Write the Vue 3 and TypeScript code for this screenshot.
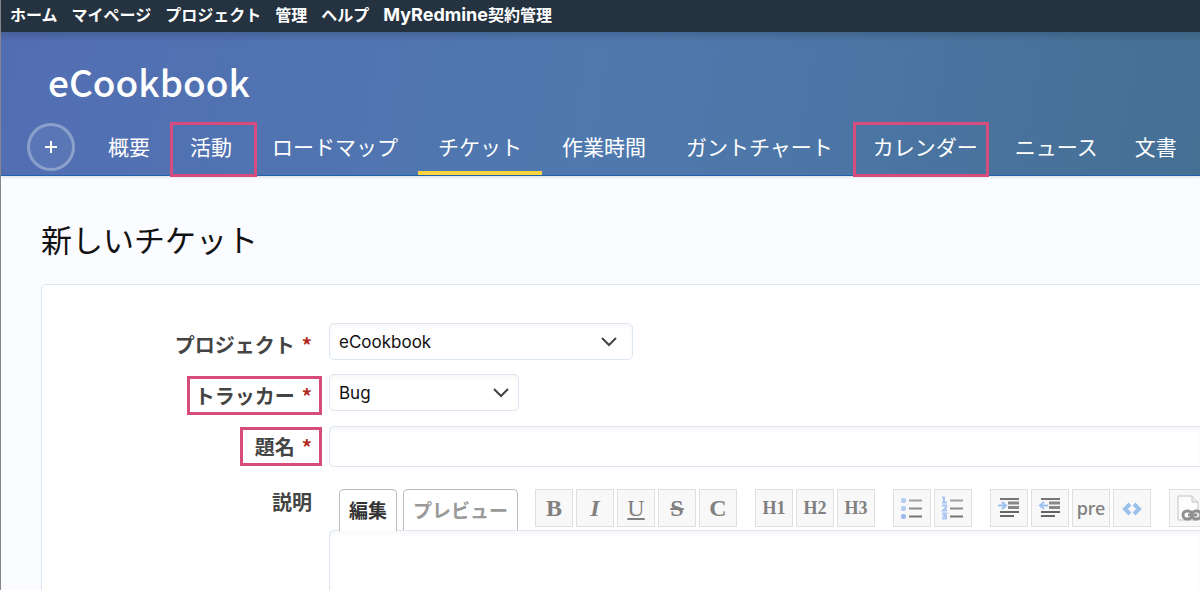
<script setup lang="ts">
import { ref } from 'vue'

interface NavItem {
  label: string
  active?: boolean
  marked?: boolean
  compact?: boolean
}

interface TopLink {
  latin?: string
  label: string
}

interface ToolButton {
  name: string
  kind: 'text' | 'icon'
  text?: string
}

const topLinks: TopLink[] = [
  { label: 'ホーム' },
  { label: 'マイページ' },
  { label: 'プロジェクト' },
  { label: '管理' },
  { label: 'ヘルプ' },
  { latin: 'MyRedmine', label: '契約管理' },
]

const navItems: NavItem[] = [
  { label: '概要' },
  { label: '活動', marked: true },
  { label: 'ロードマップ' },
  { label: 'チケット', active: true },
  { label: '作業時間' },
  { label: 'ガントチャート' },
  { label: 'カレンダー', marked: true, compact: true },
  { label: 'ニュース', compact: true },
  { label: '文書' },
]

const toolGroups: ToolButton[][] = [
  [
    { name: 'bold', kind: 'text', text: 'B' },
    { name: 'italic', kind: 'text', text: 'I' },
    { name: 'underline', kind: 'text', text: 'U' },
    { name: 'strike', kind: 'text', text: 'S' },
    { name: 'code', kind: 'text', text: 'C' },
  ],
  [
    { name: 'heading', kind: 'text', text: 'H1' },
    { name: 'heading', kind: 'text', text: 'H2' },
    { name: 'heading', kind: 'text', text: 'H3' },
  ],
  [
    { name: 'bullets', kind: 'icon' },
    { name: 'numbers', kind: 'icon' },
  ],
  [
    { name: 'indent', kind: 'icon' },
    { name: 'outdent', kind: 'icon' },
    { name: 'pre', kind: 'text', text: 'pre' },
    { name: 'snippet', kind: 'icon' },
  ],
  [{ name: 'link', kind: 'icon' }],
]

const project = ref('eCookbook')
const tracker = ref('Bug')
const subject = ref('')
const description = ref('')
</script>

<template>
  <div class="page">
    <nav class="top-menu">
      <a v-for="link in topLinks" :key="link.label" href="#"><span v-if="link.latin" class="latin">{{ link.latin }}</span>{{ link.label }}</a>
    </nav>

    <header class="header">
      <h1>eCookbook</h1>
      <nav class="main-menu">
        <button class="add" type="button" aria-label="+">
          <svg width="14" height="14" viewBox="0 0 14 14"><path d="M7 1v12M1 7h12" stroke="#fff" stroke-width="2" fill="none" /></svg>
        </button>
        <a
          v-for="item in navItems"
          :key="item.label"
          href="#"
          :class="{ active: item.active, marked: item.marked, compact: item.compact }"
        >{{ item.label }}</a>
      </nav>
    </header>

    <main class="content">
      <h2>新しいチケット</h2>
      <form class="card" @submit.prevent>
        <div class="row">
          <label for="project">プロジェクト<span class="req">*</span></label>
          <div class="select project">
            <select id="project" v-model="project"><option>eCookbook</option></select>
            <svg width="18" height="12" viewBox="0 0 18 12"><path d="M2 2l7 7 7-7" /></svg>
          </div>
        </div>
        <div class="row">
          <label for="tracker"><span class="mark">トラッカー<span class="req">*</span></span></label>
          <div class="select tracker">
            <select id="tracker" v-model="tracker"><option>Bug</option></select>
            <svg width="18" height="12" viewBox="0 0 18 12"><path d="M2 2l7 7 7-7" /></svg>
          </div>
        </div>
        <div class="row subject">
          <label for="subject"><span class="mark">題名<span class="req">*</span></span></label>
          <input id="subject" v-model="subject" type="text">
        </div>
        <div class="row description">
          <label for="description">説明</label>
          <div class="editor">
            <div class="bar">
              <button type="button" class="tab current">編集</button>
              <button type="button" class="tab">プレビュー</button>
              <div class="tools">
                <div v-for="(group, g) in toolGroups" :key="g" class="group">
                  <button v-for="(tool, t) in group" :key="t" type="button" class="tool" :class="tool.name" :aria-label="tool.text ?? tool.name">
                    <span v-if="tool.kind === 'text'">{{ tool.text }}</span>
                    <svg v-else-if="tool.name === 'bullets'" width="24" height="24" viewBox="0 0 24 24">
                      <g fill="#b4cdf3"><rect x="1" y="2" width="5" height="5" rx="2" /><rect x="1" y="10" width="5" height="5" rx="2" /><rect x="1" y="18" width="5" height="5" rx="2" fill="#9dbaf0" /></g>
                      <g stroke-width="2"><path d="M9 4.5h13" stroke="#a0a0a0" /><path d="M9 12.500h13" stroke="#8c8c8c" /><path d="M9 20.5h13" stroke="#747474" /></g>
                    </svg>
                    <svg v-else-if="tool.name === 'numbers'" width="24" height="24" viewBox="0 0 24 24">
                      <g stroke="#a9c6f3" stroke-width="2" fill="none"><path d="M1 1.500h2v5M1 6.500h5" /><path d="M1 9.500h4v2l-3 3h4" /><path d="M1 17.500h4l-2 2.500h2v2.500H1" /></g>
                      <g stroke-width="2"><path d="M9 4.5h13" stroke="#a0a0a0" /><path d="M9 12.500h13" stroke="#8c8c8c" /><path d="M9 20.5h13" stroke="#747474" /></g>
                    </svg>
                    <svg v-else-if="tool.name === 'indent' || tool.name === 'outdent'" width="24" height="24" viewBox="0 0 24 24">
                      <path d="M3 3h19" stroke="#777" stroke-width="2" />
                      <path d="M11 7h11M11 11.500h11" stroke="#888" stroke-width="3" />
                      <path d="M3 16h19" stroke="#666" stroke-width="2" /><path d="M3 20h14" stroke="#666" stroke-width="2" />
                      <path v-if="tool.name === 'indent'" d="M1 9.500h7M5 6l4 3.500L5 13" stroke="#9cc1f0" stroke-width="2" fill="none" />
                      <path v-else d="M10 9.500H3M6 6L2 9.500 6 13" stroke="#9cc1f0" stroke-width="2" fill="none" />
                    </svg>
                    <svg v-else-if="tool.name === 'snippet'" width="24" height="24" viewBox="0 0 24 24">
                      <path d="M10 8l-5 5 5 5M14 8l5 5-5 5" stroke="#9bc0ea" stroke-width="4" fill="none" />
                    </svg>
                    <svg v-else width="28" height="28" viewBox="0 0 28 28">
                      <path d="M4 2h14l6 6v18H4z" fill="#fdfdfd" stroke="#c4c4c4" /><path d="M18 2v6h6" fill="#eee" stroke="#c4c4c4" />
                      <g fill="none" stroke="#909090" stroke-width="3"><rect x="9" y="17" width="9" height="8" rx="4" /><rect x="18" y="17" width="9" height="8" rx="4" /><path d="M14 21h9" /></g>
                    </svg>
                  </button>
                </div>
              </div>
            </div>
            <textarea id="description" v-model="description"></textarea>
          </div>
        </div>
      </form>
    </main>
  </div>
</template>

<style>
body {
  margin: 0;
}
</style>

<style scoped>
* {
  box-sizing: border-box;
}

.page {
  display: flex;
  flex-direction: column;
  height: 100vh;
  overflow: hidden;
  border-left: 1px solid #85878b;
  background: #fafcff;
  color: #111;
  font-family: "Noto Sans CJK JP", sans-serif;
}

a {
  color: #fff;
  text-decoration: none;
  white-space: nowrap;
}

button {
  font-family: inherit;
}

.top-menu {
  display: flex;
  flex: none;
  gap: 14px;
  height: 32px;
  padding: 0 9px;
  background: #25323f;
  font-size: 16px;
  font-weight: 700;
  line-height: 28px;
}

.latin {
  font-family: Inter, sans-serif;
  font-size: 18px;
}

.header {
  flex: none;
  padding: 26px 0 0 26px;
  border-bottom: 1px solid #1f62ad;
  background: linear-gradient(#0002, #0000 10px), linear-gradient(100deg, #526eb3, #4f79ae 52%, #456f93);
  box-shadow: 0 1px 3px #0002;
}

h1 {
  margin: 0 0 0 21px;
  color: #fff;
  font-size: 37px;
  font-weight: 500;
  line-height: 46px;
}

.main-menu {
  display: flex;
  height: 71px;
  padding-top: 17px;
}

.add {
  display: grid;
  flex: none;
  place-items: center;
  width: 48px;
  height: 48px;
  margin: 2px 13px 0 0;
  padding: 0;
  border: 3px solid #ffffff4d;
  border-radius: 50%;
  background: #ffffff0d;
}

.main-menu a {
  position: relative;
  flex: none;
  padding: 0 20px;
  font-size: 21px;
  line-height: 50px;
}

.main-menu a.active {
  border-bottom: 4px solid #fcd43d;
}

.main-menu a.compact {
  padding-right: 17px;
}

.main-menu a.marked::after {
  content: "";
  position: absolute;
  inset: 1px -5px -2px 0;
  border: 3px solid #d64c7c;
}

.main-menu a.compact::after {
  right: 6px;
}

.content {
  display: flex;
  flex: 1;
  flex-direction: column;
  min-height: 0;
  padding: 40px 0 0 40px;
}

h2 {
  margin: 0 0 22px;
  font-size: 31px;
  font-weight: 400;
  line-height: 46px;
}

.card {
  display: flex;
  flex: 1;
  flex-direction: column;
  gap: 14px;
  padding: 38px 0 0 25px;
  border: solid #dce6f0;
  border-width: 1px 0 0 1px;
  border-radius: 5px 0 0 0;
  background: #fff;
}

.row {
  display: flex;
  gap: 17px;
}

.row label {
  flex: none;
  width: 245px;
  padding-top: 7px;
  color: #444;
  font-size: 20px;
  font-weight: 700;
  line-height: 30px;
  text-align: right;
}

.req {
  margin-left: 7px;
  color: #b22a1c;
}

.mark {
  position: relative;
}

.mark::after {
  content: "";
  position: absolute;
  inset: -5px -10px -5px -8px;
  border: 3px solid #d64c7c;
}

.subject {
  margin-top: 1px;
}

.subject label {
  padding-top: 6px;
}

.subject .mark::after {
  left: -15px;
}

.select {
  display: grid;
  align-items: center;
  height: 37px;
}

.project {
  width: 304px;
}

.tracker {
  width: 190px;
}

.select select,
.select svg {
  grid-area: 1 / 1;
}

.select svg {
  justify-self: end;
  margin-right: 15px;
  pointer-events: none;
  fill: none;
  stroke: #444;
  stroke-width: 2;
}

.tracker svg {
  margin-right: 9px;
}

select,
input,
textarea {
  border: 1px solid #dce6f0;
  border-radius: 5px;
  background: #fff;
  box-shadow: inset 0 3px 4px #00000008;
  color: #111;
  font-family: Inter, "Noto Sans CJK JP", sans-serif;
  font-size: 17px;
}

select {
  width: 100%;
  height: 100%;
  padding: 0 9px;
  appearance: none;
}

input {
  flex: 1;
  height: 41px;
  border-right: 0;
  border-radius: 5px 0 0 5px;
}

.description {
  flex: 1;
  margin-top: 8px;
}

.description label {
  padding-top: 0;
  line-height: 26px;
}

.editor {
  display: flex;
  flex: 1;
  flex-direction: column;
  min-width: 0;
}

.bar {
  display: flex;
  gap: 6px;
  height: 41px;
  padding-left: 10px;
}

.tab {
  flex: none;
  height: 42px;
  padding: 0 9px 3px;
  border: 1px solid #bbb;
  border-bottom: 0;
  border-radius: 5px 5px 0 0;
  background: #fff;
  color: #999;
  font-size: 19px;
  font-weight: 700;
}

.tab.current {
  position: relative;
  color: #333;
}

.tools {
  display: flex;
  flex: 1;
  gap: 18px;
  margin-left: 11px;
  overflow: hidden;
}

.group {
  display: flex;
  flex: none;
  gap: 3px;
}

.tool {
  display: grid;
  place-items: center;
  width: 38px;
  height: 38px;
  padding: 0;
  border: 1px solid #dfdfdf;
  background: #f8f8f8;
  color: #808080;
  font-family: "Liberation Serif", serif;
  font-size: 24px;
  font-weight: 700;
  line-height: 24px;
}

.italic {
  font-style: italic;
}

.underline {
  font-weight: 400;
  text-decoration: underline;
}

.strike {
  text-decoration: line-through;
}

.heading {
  font-size: 18px;
}

.pre {
  font-family: "Noto Sans", sans-serif;
  font-size: 18px;
  font-weight: 500;
}

textarea {
  flex: 1;
  border-width: 1px 0 0 1px;
  border-radius: 5px 0 0 0;
  resize: none;
}
</style>
